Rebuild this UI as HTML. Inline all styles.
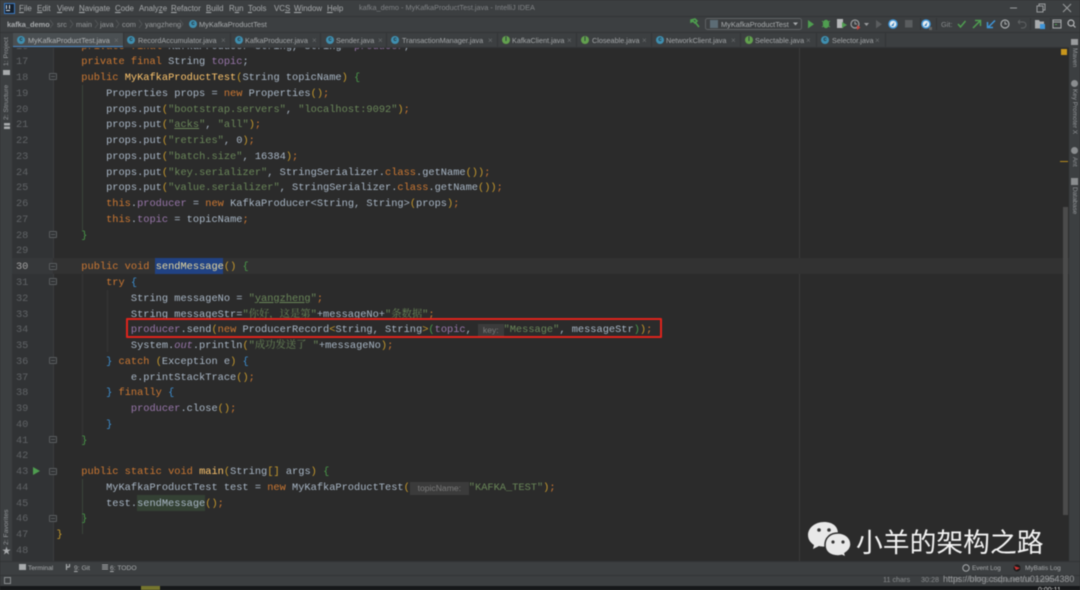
<!DOCTYPE html>
<html><head><meta charset="utf-8">
<style>
html,body{margin:0;padding:0;background:#2b2b2b}
#a{position:relative;width:1080px;height:590px;overflow:hidden;background:#2b2b2b;font-family:"Liberation Sans","Noto Sans CJK SC",sans-serif;filter:blur(.45px)}
.b{position:absolute}
.t{position:absolute;white-space:nowrap;font-size:7.9px;line-height:12px;color:#a8abad}
#code{position:absolute;margin:0;font:10.33px/15.77px "Liberation Mono","Noto Serif CJK SC",monospace;color:#a9b7c6;white-space:pre}
#code div{height:15.77px;overflow:visible}
#nums{position:absolute;margin:0;font:10.28px/15.77px "Liberation Mono",monospace;color:#606366;white-space:pre}
#nums div{height:15.77px}
.k{color:#cc7832}.s{color:#6a8759}.f{color:#9876aa}.m{color:#ffc66d}.g{color:#4a9a4a}.y{color:#c79a2d}.l{color:#3d8fd1}
.h{display:inline-block;background:#3b3b3b;color:#7a7a7a;font:8.6px/13px "Liberation Sans",sans-serif;text-align:center;vertical-align:-1px}
.tab{position:absolute;top:33px;height:14px;border-right:1px solid #323436}
.ti{position:absolute;top:36px;width:8px;height:8px;border-radius:50%;background:#3f8fb0;color:#27343a;font:bold 6px/8px "Liberation Sans",sans-serif;text-align:center}
.ti.n{background:#62a04e}
.tx{position:absolute;top:35px;color:#a3a6a8;font-size:7.25px;line-height:12px;white-space:nowrap}
.x{position:absolute;top:35px;color:#6a6d6f;font-size:8px;line-height:12px}
.v{position:absolute;white-space:nowrap;font-size:6.8px;line-height:10px;color:#94979a;transform-origin:0 0}
.r{font-size:6.4px}
.fold{position:absolute;left:48.5px;width:6px;height:5px;border:1px solid #5a5d5f;border-radius:1px;background:#2f3133}
.fold:after{content:"";position:absolute;left:1px;top:2px;width:4px;height:1px;background:#5a5d5f}
</style></head><body>
<div id="a">
<!-- title/menu bar -->
<div class="b" style="left:0;top:0;width:1080px;height:16px;background:#3c3f41"></div>
<div class="b" style="left:4px;top:3px;width:9px;height:9px;background:#16202c;border:.5px solid #3a78c0"></div>
<div class="b" style="left:6px;top:5px;width:1px;height:4px;background:#dfe6ee"></div>
<div class="b" style="left:9px;top:5px;width:1px;height:4px;background:#dfe6ee"></div>
<div class="b" style="left:6px;top:10px;width:4px;height:1px;background:#dfe6ee"></div>
<span class="t" style="left:19px;top:3px"><u>F</u>ile</span>
<span class="t" style="left:37px;top:3px"><u>E</u>dit</span>
<span class="t" style="left:57px;top:3px"><u>V</u>iew</span>
<span class="t" style="left:79px;top:3px"><u>N</u>avigate</span>
<span class="t" style="left:115px;top:3px"><u>C</u>ode</span>
<span class="t" style="left:139px;top:3px">Analy<u>z</u>e</span>
<span class="t" style="left:171px;top:3px"><u>R</u>efactor</span>
<span class="t" style="left:206px;top:3px"><u>B</u>uild</span>
<span class="t" style="left:229px;top:3px">R<u>u</u>n</span>
<span class="t" style="left:248px;top:3px"><u>T</u>ools</span>
<span class="t" style="left:274px;top:3px">VC<u>S</u></span>
<span class="t" style="left:294px;top:3px"><u>W</u>indow</span>
<span class="t" style="left:327px;top:3px"><u>H</u>elp</span>
<span class="t" style="left:359px;top:2px;color:#808386;font-size:7.35px">kafka_demo - MyKafkaProductTest.java - IntelliJ IDEA</span>
<svg class="b" style="left:1008px;top:3px" width="68" height="10" fill="none" stroke="#9a9c9e" stroke-width="1"><path d="M2 5h7"/><path d="M29 3h6v6h-6zM31 3V1h6v6h-2"/><path d="M55 1l8 8M63 1l-8 8"/></svg>
<!-- nav bar -->
<div class="b" style="left:0;top:16px;width:1080px;height:17px;background:#3c3f41;border-top:1px solid #323436;box-sizing:border-box"></div>
<span class="t" style="left:7px;top:19px;font-weight:bold;color:#a8abad;font-size:7.4px">kafka_demo</span>
<span class="t" style="left:57px;top:19px;color:#979a9c;font-size:7.4px">src</span>
<span class="t" style="left:76px;top:19px;color:#979a9c;font-size:7.4px">main</span>
<span class="t" style="left:100px;top:19px;color:#979a9c;font-size:7.4px">java</span>
<span class="t" style="left:122px;top:19px;color:#979a9c;font-size:7.4px">com</span>
<span class="t" style="left:145px;top:19px;color:#979a9c;font-size:7.4px">yangzheng</span>
<span class="t" style="left:199px;top:19px;color:#a8abad;font-size:7.4px">MyKafkaProductTest</span>
<svg class="b" style="left:0;top:17px" width="200" height="15" fill="none" stroke="#55585a" stroke-width=".8"><path d="M50 3l3 4-3 4M70 3l3 4-3 4M95 3l3 4-3 4M116 3l3 4-3 4M139 3l3 4-3 4M180 3l3 4-3 4"/></svg>
<div class="ti" style="left:189px;top:20px;background:#3f8fb0">c</div>
<!-- toolbar -->
<svg class="b" style="left:688px;top:17px" width="392" height="15" fill="none">
<path d="M3 3l4-1 2 2-2 2-2-2-2 1zM7 5l4 5" stroke="#4e9e4e" stroke-width="1.6"/>
<rect x="17.500" y="1.500" width="96" height="11" rx="2" stroke="#5e6163" fill="#3c3f41"/>
<rect x="22" y="3" width="8" height="8" fill="#5c6c75"/>
<path d="M110 5.500l-2.500 3-2.500-3z" fill="#a8abad"/>
<path d="M120 3l6 4.200-6 4.200z" fill="#4f9e50"/>
<ellipse cx="138" cy="7" rx="3.200" ry="4.200" fill="#4f9e50"/><path d="M134 4l1.500 1M142 4l-1.500 1M134 10l1.500-1M142 10l-1.500-1" stroke="#4f9e50"/>
<rect x="149" y="2" width="6" height="9" fill="#b5b7b9"/><path d="M154 5l5 3-5 3z" fill="#4f9e50"/>
<circle cx="167" cy="7" r="4" stroke="#9a9c9e" stroke-width="1.200"/><path d="M167 4.500v2.500h2" stroke="#9a9c9e"/><path d="M169 8l3.500 2.500-3.500 2.500z" fill="#c7443e"/>
<path d="M176 6h5l-2.500 3z" fill="#9a9c9e"/>
<path d="M188 3l6 4.200-6 4.200z" fill="#5a5d5f"/>
<circle cx="205" cy="7" r="4.800" fill="#3f95d8"/><circle cx="205" cy="7" r="3.300" fill="#e8eef2"/><path d="M203 9l3.500-4-1 4z" fill="#2f7fc0"/>
<rect x="217" y="3" width="7.500" height="7.500" fill="#5a5d5f"/>
<path d="M232.500 1v12" stroke="#333537"/>
<circle cx="238" cy="7" r="4.800" fill="#3f95d8"/><circle cx="238" cy="7" r="3.300" fill="#e8eef2"/><path d="M236 9l3.500-4-1 4z" fill="#2f7fc0"/><path d="M241 10h3v3h-3z" fill="#666"/>
<path d="M248.500 1v12" stroke="#333537"/>
<path d="M270 7l2.500 3 5-6" stroke="#4f9e50" stroke-width="1.500"/>
<path d="M285 11l7-7M287 3.500h5.500v5.500" stroke="#4f9e50" stroke-width="1.500"/>
<path d="M307 3.500l-7 7M299.500 5v5.500h5.500" stroke="#3f95d8" stroke-width="1.500"/>
<circle cx="317" cy="7" r="4" stroke="#a8abad" stroke-width="1.200"/><path d="M317 4.500v2.500h2" stroke="#a8abad"/>
<path d="M330 5h5a3 3 0 0 1 0 6h-2M330 5l2-2M330 5l2 2" stroke="#5f6264"/>
<path d="M342.500 1v12" stroke="#333537"/>
<path d="M347 3h4l1 1.500h4v7h-9z" fill="#a8abad"/><rect x="352" y="7" width="5" height="5" fill="#3f95d8"/>
<path d="M362.500 1v12" stroke="#333537"/>
<rect x="365" y="3" width="8" height="8" stroke="#a8abad"/><path d="M365 5h8" stroke="#a8abad"/><path d="M367 7.500h2" stroke="#4f9e50"/>
<circle cx="383" cy="6" r="3" stroke="#b5b7b9" stroke-width="1.200"/><path d="M385 8l2.500 2.500" stroke="#b5b7b9" stroke-width="1.200"/>
</svg>
<span class="t" style="left:721px;top:19px;font-size:7.4px;color:#a8abad">MyKafkaProductTest</span>
<span class="t" style="left:941px;top:19px;color:#85888a;font-size:7.4px">Git:</span>
<!-- tabs -->
<div class="b" style="left:0;top:32px;width:1080px;height:15px;background:#3c3f41;border-top:1px solid #323436;box-sizing:border-box"></div>
<div class="b" style="left:13px;top:33px;width:110px;height:14px;background:#4a4f52"></div>
<div class="b" style="left:13px;top:45.500px;width:110px;height:2px;background:#4a88c7"></div>
<div class="tab" style="left:123px;width:0"></div><div class="tab" style="left:230px;width:0"></div><div class="tab" style="left:320px;width:0"></div><div class="tab" style="left:386px;width:0"></div><div class="tab" style="left:497px;width:0"></div><div class="tab" style="left:576px;width:0"></div><div class="tab" style="left:651px;width:0"></div><div class="tab" style="left:740px;width:0"></div><div class="tab" style="left:816px;width:0"></div><div class="tab" style="left:885px;width:0"></div>
<div class="ti" style="left:17px">c</div><span class="tx" style="left:28px;color:#b0b3b5">MyKafkaProductTest.java</span><span class="x" style="left:114px">×</span>
<div class="ti" style="left:127px">c</div><span class="tx" style="left:138px">RecordAccumulator.java</span><span class="x" style="left:221px">×</span>
<div class="ti" style="left:235px">c</div><span class="tx" style="left:245px">KafkaProducer.java</span><span class="x" style="left:312px">×</span>
<div class="ti" style="left:326px">c</div><span class="tx" style="left:336px">Sender.java</span><span class="x" style="left:378px">×</span>
<div class="ti" style="left:391px">c</div><span class="tx" style="left:402px">TransactionManager.java</span><span class="x" style="left:488px">×</span>
<div class="ti n" style="left:502px">I</div><span class="tx" style="left:512px">KafkaClient.java</span><span class="x" style="left:567px">×</span>
<div class="ti n" style="left:581px">I</div><span class="tx" style="left:592px">Closeable.java</span><span class="x" style="left:642px">×</span>
<div class="ti" style="left:656px">c</div><span class="tx" style="left:666px">NetworkClient.java</span><span class="x" style="left:731px">×</span>
<div class="ti n" style="left:745px">I</div><span class="tx" style="left:755px">Selectable.java</span><span class="x" style="left:806px">×</span>
<div class="ti" style="left:821px">c</div><span class="tx" style="left:832px">Selector.java</span><span class="x" style="left:875px">×</span>
<div class="b" style="left:0;top:47px;width:1080px;height:.5px;background:#323436"></div>
<!-- editor area -->
<div class="b" id="ed" style="left:12px;top:47.500px;width:1057px;height:513.500px;overflow:hidden;background:#2b2b2b">
 <div class="b" style="left:0;top:0;width:41px;height:514px;background:#313335"></div>
 <div class="b" style="left:41px;top:0;width:1px;height:514px;background:#3b3d3f"></div>
 <div class="b" style="left:787px;top:0;width:1px;height:514px;background:#3a3a3a"></div>
 <div class="b" style="left:41px;top:210.600px;width:1016px;height:15.770px;background:#323232"></div>
 <div class="b" style="left:0;top:210.600px;width:41px;height:15.770px;background:#36383a"></div>
 <div class="b" style="left:143px;top:210.600px;width:68px;height:15.770px;background:#214283"></div>
 <div class="b" style="left:125px;top:447.300px;width:68px;height:15.770px;background:#344134"></div>
 <div class="b" style="left:69.500px;top:37px;width:1px;height:145px;background:#3a443a"></div>
 <div class="b" style="left:69.500px;top:226px;width:1px;height:170px;background:#363636"></div>
 <div class="b" style="left:94.500px;top:242px;width:1px;height:62px;background:#363636"></div>
 <div class="b" style="left:69.500px;top:431px;width:1px;height:55px;background:#3a443a"></div>
</div>
<div class="b" style="left:12px;top:47.500px;width:1057px;height:513.500px;overflow:hidden">
<pre id="nums" style="left:4px;top:-8px"><div>16</div><div>17</div><div>18</div><div>19</div><div>20</div><div>21</div><div>22</div><div>23</div><div>24</div><div>25</div><div>26</div><div>27</div><div>28</div><div>29</div><div style="color:#a4a3a3">30</div><div>31</div><div>32</div><div>33</div><div>34</div><div>35</div><div>36</div><div>37</div><div>38</div><div>39</div><div>40</div><div>41</div><div>42</div><div>43</div><div>44</div><div>45</div><div>46</div><div>47</div><div>48</div></pre>
<pre id="code" style="left:44.500px;top:-8px"><div>    <span class="k">private final</span> KafkaProducer&lt;String, String&gt; <span class="f">producer</span>;</div><div>    <span class="k">private final</span> String <span class="f">topic</span>;</div><div>    <span class="k">public</span> <span class="m">MyKafkaProductTest</span><span class="y">(</span>String topicName<span class="y">)</span> <span class="g">{</span></div><div>        Properties props = <span class="k">new</span> Properties<span class="y">()</span><span class="k">;</span></div><div>        props.put<span class="y">(</span><span class="s">"bootstrap.servers"</span>, <span class="s">"localhost:9092"</span><span class="y">)</span><span class="k">;</span></div><div>        props.put<span class="y">(</span><span class="s">"<u>acks</u>"</span>, <span class="s">"all"</span><span class="y">)</span><span class="k">;</span></div><div>        props.put<span class="y">(</span><span class="s">"retries"</span>, 0<span class="y">)</span><span class="k">;</span></div><div>        props.put<span class="y">(</span><span class="s">"batch.size"</span>, 16384<span class="y">)</span><span class="k">;</span></div><div>        props.put<span class="y">(</span><span class="s">"key.serializer"</span>, StringSerializer.<span class="k">class</span>.getName<span class="y">())</span><span class="k">;</span></div><div>        props.put<span class="y">(</span><span class="s">"value.serializer"</span>, StringSerializer.<span class="k">class</span>.getName<span class="y">())</span><span class="k">;</span></div><div>        <span class="k">this</span>.<span class="f">producer</span> = <span class="k">new</span> KafkaProducer&lt;String, String&gt;<span class="y">(</span>props<span class="y">)</span><span class="k">;</span></div><div>        <span class="k">this</span>.<span class="f">topic</span> = topicName<span class="k">;</span></div><div>    <span class="g">}</span></div><div> </div><div>    <span class="k">public void</span> <span class="m" style="color:#e8d9a0">sendMessage</span><span class="y">()</span> <span class="g">{</span></div><div>        <span class="k">try</span> <span class="l">{</span></div><div>            String messageNo = <span class="s">"<u>yangzheng</u>"</span><span class="k">;</span></div><div>            String messageStr=<span class="s">"你好，这是第"</span>+messageNo+<span class="s">"条数据"</span><span class="k">;</span></div><div>            <span class="f">producer</span>.send<span class="y">(</span><span class="k">new</span> ProducerRecord<span class="y">&lt;</span>String, String<span class="y">&gt;</span><span class="g">(</span><span class="f">topic</span>, <span class="h" style="width:25.5px">key:</span><span class="s">"Message"</span>, messageStr<span class="g">)</span><span class="y">)</span><span class="k">;</span></div><div>            System.<span class="f"><i>out</i></span>.println<span class="y">(</span><span class="s">"成功发送了 "</span>+messageNo<span class="y">)</span><span class="k">;</span></div><div>        <span class="l">}</span> <span class="k">catch</span> <span class="y">(</span>Exception e<span class="y">)</span> <span class="l">{</span></div><div>            e.printStackTrace<span class="y">()</span><span class="k">;</span></div><div>        <span class="l">}</span> <span class="k">finally</span> <span class="l">{</span></div><div>            <span class="f">producer</span>.close<span class="y">()</span><span class="k">;</span></div><div>        <span class="l">}</span></div><div>    <span class="g">}</span></div><div> </div><div>    <span class="k">public static void</span> <span class="m">main</span><span class="y">(</span>String<span class="y">[]</span> args<span class="y">)</span> <span class="g">{</span></div><div>        MyKafkaProductTest test = <span class="k">new</span> MyKafkaProductTest<span class="y">(</span><span class="h" style="width:59px">topicName:</span><span class="s">"KAFKA_TEST"</span><span class="y">)</span><span class="k">;</span></div><div>        test.sendMessage<span class="y">()</span><span class="k">;</span></div><div>    <span class="g">}</span></div><div><span class="y">}</span></div><div> </div></pre>
</div>
<!-- folds -->
<div class="fold" style="top:73px"></div><div class="fold" style="top:231px"></div><div class="fold" style="top:263px"></div><div class="fold" style="top:278px"></div><div class="fold" style="top:357px"></div><div class="fold" style="top:436px"></div><div class="fold" style="top:468px"></div><div class="fold" style="top:515px"></div>
<svg class="b" style="left:32px;top:466px" width="9" height="10"><path d="M1 1l7 4-7 4z" fill="#4f9e50"/></svg>
<!-- red box -->
<div class="b" style="left:126px;top:318px;width:532px;height:16px;border:2px solid #e0231c;border-radius:1px"></div>
<!-- left strip -->
<div class="b" style="left:0;top:33px;width:12px;height:528px;background:#3c3f41"></div>
<span class="v" style="left:2px;top:66px;transform:rotate(-90deg)">1: Project</span>
<div class="b" style="left:3px;top:70px;width:7px;height:5px;background:#a8abad"></div>
<span class="v" style="left:2px;top:120px;transform:rotate(-90deg)">2: Structure</span>
<div class="b" style="left:4px;top:123px;width:6px;height:6px;background:linear-gradient(#a8abad 0 40%,transparent 40% 60%,#a8abad 60%)"></div>
<span class="v" style="left:2px;top:545px;transform:rotate(-90deg)">2: Favorites</span>
<span class="b" style="left:2px;top:546px;font-size:9px;line-height:10px;color:#a8abad">★</span>
<!-- right strip -->
<div class="b" style="left:1069px;top:33px;width:11px;height:528px;background:#3c3f41"></div>
<span class="v r" style="left:1079px;top:48px;transform:rotate(90deg)">Maven</span>
<span class="v r" style="left:1079px;top:89px;transform:rotate(90deg)">Key Promoter X</span>
<span class="v r" style="left:1079px;top:157px;transform:rotate(90deg)">Ant</span>
<span class="v r" style="left:1079px;top:187px;transform:rotate(90deg)">Database</span>
<div class="b" style="left:1071px;top:39px;width:7px;height:6px;background:#9a9c9e"></div>
<div class="b" style="left:1071px;top:80px;width:7px;height:7px;border-radius:50%;background:#8a8d8f"></div>
<div class="b" style="left:1071px;top:147px;width:7px;height:7px;border-radius:50%;background:#8a8d8f"></div>
<div class="b" style="left:1071px;top:178px;width:7px;height:7px;background:#8a8d8f"></div>
<!-- markers & scrollbar -->
<div class="b" style="left:1061px;top:49px;width:6px;height:6px;background:#c8961c"></div>
<div class="b" style="left:1060px;top:161px;width:8px;height:1px;background:#b58a1e"></div>
<div class="b" style="left:1063px;top:207px;width:5px;height:308px;background:#4b4b4b"></div>
<!-- tool window bar -->
<div class="b" style="left:0;top:561px;width:1080px;height:14px;background:#3c3f41;border-top:1px solid #323436;box-sizing:border-box"></div>
<svg class="b" style="left:0;top:562px" width="130" height="12" fill="none" stroke="#a8abad"><rect x="19.500" y="2.500" width="6" height="5" fill="#a8abad"/><path d="M66.500 2v6M66.500 5h3M69.500 2v3" stroke-width="1.200"/><path d="M102 3h6M102 5h6M102 7h6" stroke-width="1"/></svg>
<span class="t" style="left:28px;top:563px;font-size:6.7px">Terminal</span>
<span class="t" style="left:74px;top:563px;font-size:6.7px"><u>9</u>: Git</span>
<span class="t" style="left:110px;top:563px;font-size:6.7px"><u>6</u>: TODO</span>
<svg class="b" style="left:960px;top:563px" width="80" height="11" fill="none"><circle cx="6" cy="5" r="3.200" stroke="#a8abad"/><circle cx="57" cy="5" r="3.500" fill="#1a1a1a"/><path d="M54 3l6 2-4 2z" fill="#c33"/></svg>
<span class="t" style="left:972px;top:563px;font-size:6.4px">Event Log</span>
<span class="t" style="left:1025px;top:563px;font-size:6.5px">MyBatis Log</span>
<!-- status bar -->
<div class="b" style="left:0;top:575px;width:1080px;height:11px;background:#3c3f41;border-top:1px solid #323436;box-sizing:border-box"></div>
<div class="b" style="left:4px;top:577px;width:5px;height:5px;border:1px solid #8a8d8f"></div>
<span class="t" style="left:883px;top:574px;font-size:7.2px;color:#8b8e90">11 chars</span>
<span class="t" style="left:921px;top:574px;font-size:7.2px;color:#8b8e90">30:28</span>
<span class="t" style="left:948px;top:574px;font-size:7.2px;color:#6f7274">CRLF  UTF-8  4 spaces  Git: master</span>
<span class="t" style="left:943px;top:573px;font-size:8.9px;color:#9a9c9e">https://blog.csdn.net/u012954380</span>
<!-- black bottom -->
<div class="b" style="left:0;top:585.500px;width:1080px;height:5px;background:#16181a"></div>
<div class="b" style="left:141px;top:585.500px;width:19px;height:5px;background:#75752d"></div>
<span class="t" style="left:1038px;top:585px;font-size:7px;color:#ddd">0:00:11</span>
<!-- watermark -->
<svg class="b" style="left:808px;top:521px" width="46" height="38"><path d="M16 1C7 1 0 7 0 14c0 5 3 8 6 10l-1 4 6-3c1 .4 3 .6 4 .6 9 0 15-6 15-13S25 1 16 1z" fill="#e8e8e8"/><path d="M30 12c-8 0-13 5-13 12s5 11 13 11c2 0 3-.3 4-.6l4 2-1-4c3-2 6-5 6-9 0-7-6-11.400-13-11.400z" fill="#e8e8e8" stroke="#2b2b2b" stroke-width="1.500"/><circle cx="11" cy="9" r="1.800" fill="#333"/><circle cx="21" cy="9" r="1.800" fill="#333"/><circle cx="25" cy="21" r="1.600" fill="#333"/><circle cx="35" cy="21" r="1.600" fill="#333"/></svg>
<span class="b" style="left:856px;top:524px;font:26.800px/34px 'Noto Sans CJK SC',sans-serif;color:#f2f2f2;white-space:nowrap">小羊的架构之路</span>
</div>
</body></html>
